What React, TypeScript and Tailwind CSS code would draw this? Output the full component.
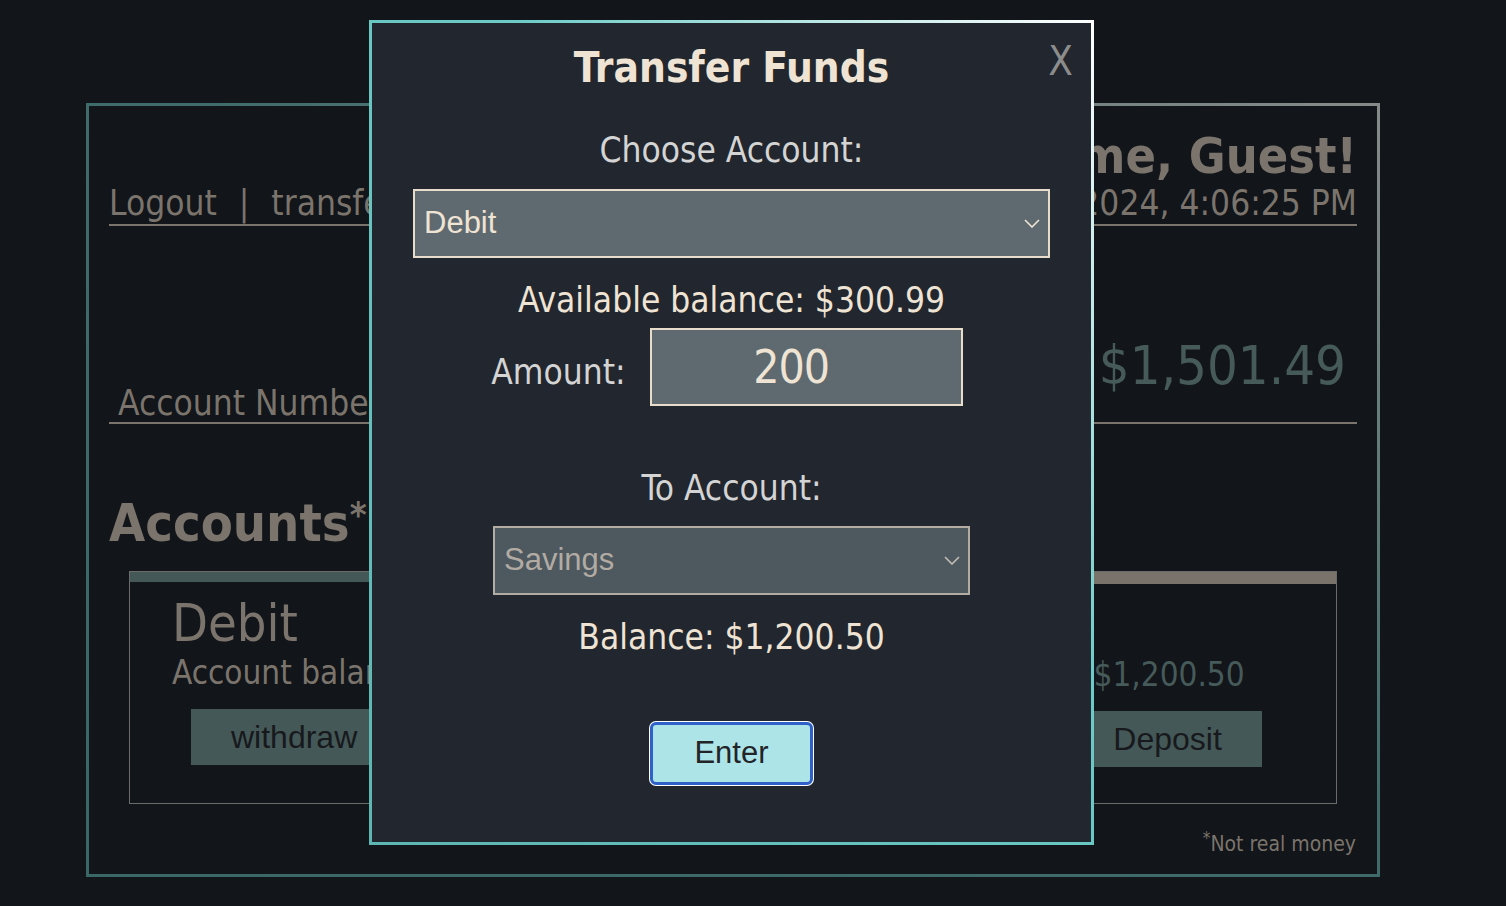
import React from 'react';

const tahoma = { fontFamily: '"DejaVu Sans Condensed", "DejaVu Sans", sans-serif' };
const arial = { fontFamily: '"Liberation Sans", Arial, sans-serif' };

function Chevron({ color }: { color: string }) {
  return (
    <svg width="16" height="9" viewBox="0 0 16 9" fill="none">
      <polyline points="1,1 8,8 15,1" stroke={color} strokeWidth="1.6" />
    </svg>
  );
}

function AccountCard({ name, balance, bar }: { name: string; balance: string; bar: string }) {
  return (
    <div className="flex-1 border border-[#6b6b6b]">
      <div className={bar} />
      <div className="px-[42px] mt-[11px]">
        <div className="text-[52px] leading-[60px] text-[#7b746c]">{name}</div>
        <div className="text-[33px] leading-[40px] text-[#7b746c]">
          Account balance: <span className="ml-[40px] text-[#465a5a]">{balance}</span>
        </div>
      </div>
      <div className="flex gap-[60px] pl-[61px] mt-[16px] pb-[36px]" style={arial}>
        <button className="h-[56px] px-[40px] bg-[#445858] text-[32px] text-[#17191c]">withdraw</button>
        <button className="h-[56px] px-[40px] bg-[#445858] text-[32px] text-[#17191c]">Deposit</button>
      </div>
    </div>
  );
}

function Dashboard() {
  return (
    <div className="pt-[103px] pl-[86px]">
      <div className="w-[1294px] h-[774px] border-[3px] border-solid [border-image:linear-gradient(to_top_right,#3a6866_0%,#3f6c6a_55%,#868b89_100%)_1] flex flex-col">
        <div className="mx-[20px] mt-[22px] flex justify-between items-end border-b-2 border-[#7b746c] pb-[2px]">
          <div className="text-[35px] leading-[38px] text-[#7b746c]">
            Logout<span className="mx-[22px]">|</span>transfer
          </div>
          <div className="text-right text-[#7b746c]">
            <div className="text-[50px] leading-[56px] font-bold">Welcome, Guest!</div>
            <div className="text-[35px] leading-[38px]">12/4/2024, 4:06:25 PM</div>
          </div>
        </div>

        <div className="mx-[20px] mt-[112px] flex justify-between items-end border-b-2 border-[#7b746c]">
          <div className="pl-[9px] text-[35px] leading-[38px] text-[#7b746c]">Account Number: 4417 1234 5678</div>
          <div className="pr-[11px] mb-[28px] text-[54px] leading-[56px] text-[#465a5a]">$1,501.49</div>
        </div>

        <div className="mx-[20px] mt-[69px] text-[52px] leading-[60px] font-bold text-[#7b746c]">
          Accounts<span className="relative -top-[14px] text-[36px] leading-none">*</span>
        </div>

        <div className="mx-[40px] mt-[18px] flex gap-[24px]">
          <AccountCard name="Debit" balance="$300.99" bar="h-[10px] bg-[#445858]" />
          <AccountCard name="Savings" balance="$1,200.50" bar="h-[12px] bg-[#7a736b]" />
        </div>

        <div className="mt-[28px] pr-[21px] text-right text-[21px] leading-[24px] text-[#7b746c]">
          <span className="relative -top-[7px] text-[17px] leading-none">*</span>Not real money
        </div>
      </div>
    </div>
  );
}

function TransferModal() {
  return (
    <div className="absolute left-[369px] top-[20px] w-[725px] h-[825px] bg-[#22262e] border-[3px] border-solid [border-image:linear-gradient(to_top_right,#5cb6b2_0%,#6ccbc7_60%,#ffffff_100%)_1] flex flex-col items-center">
      <button className="absolute top-[18px] right-[18px] text-[40px] leading-[40px] text-[#8c8c8c]" style={tahoma}>
        X
      </button>
      <h2 className="mt-[23px] text-[42px] leading-[44px] font-bold text-[#efe4d4]">Transfer Funds</h2>

      <div className="mt-[40px] text-[35px] leading-[40px] text-[#d4d4d4]">Choose Account:</div>
      <div className="mt-[19px] w-[637px] h-[69px] bg-[#5f6a70] border-2 border-[#e8dccb] flex items-center justify-between pl-[9px] pr-[8px]">
        <span className="text-[31px] text-[#efe4d4]" style={arial}>Debit</span>
        <Chevron color="#efe4d4" />
      </div>

      <div className="mt-[22px] text-[35px] leading-[40px] text-[#efe4d4]">Available balance: $300.99</div>

      <div className="mt-[8px] flex items-center gap-[24px] -ml-[9px]">
        <span className="pt-[10px] text-[35px] leading-[40px] text-[#d4d4d4]">Amount:</span>
        <div className="w-[313px] h-[78px] bg-[#5f6a70] border-2 border-[#e8dccb] flex items-center justify-center pr-[30px]">
          <span className="text-[46px] tracking-[-1px] text-[#efe4d4]">200</span>
        </div>
      </div>

      <div className="mt-[62px] text-[35px] leading-[40px] text-[#d4d4d4]">To Account:</div>
      <div className="mt-[18px] w-[477px] h-[69px] bg-[#4d585f] border-2 border-[#b3aca3] flex items-center justify-between pl-[9px] pr-[8px]">
        <span className="text-[31px] text-[#b2aba3]" style={arial}>Savings</span>
        <Chevron color="#c4bdb4" />
      </div>

      <div className="mt-[22px] text-[35px] leading-[40px] text-[#efe4d4]">Balance: $1,200.50</div>

      <button
        className="mt-[65px] w-[163px] h-[63px] bg-[#ade4e7] border-[3px] border-[#2f61c9] rounded-[6px] ring-1 ring-white text-[31px] text-[#222428]"
        style={arial}
      >
        Enter
      </button>
    </div>
  );
}

export default function App() {
  return (
    <div className="relative w-[1506px] h-[906px] overflow-hidden bg-[#121519]" style={tahoma}>
      <Dashboard />
      <TransferModal />
    </div>
  );
}
